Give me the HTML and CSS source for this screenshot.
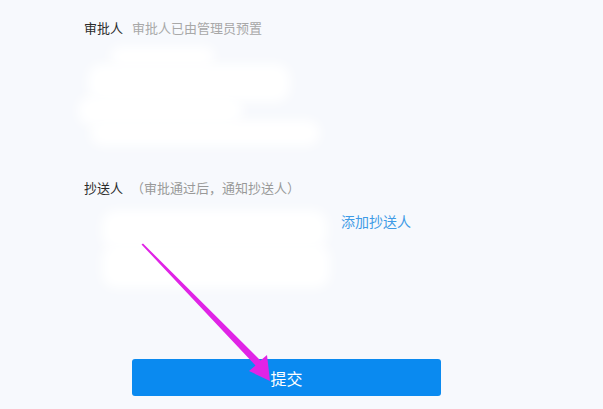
FILE: index.html
```html
<!DOCTYPE html>
<html lang="zh-CN">
<head>
<meta charset="utf-8">
<title>审批</title>
<link rel="stylesheet" href="styles.css">
</head>
<body>
<div class="page">
  <div class="field-row first">
    <span class="label">审批人</span>
    <span class="hint">审批人已由管理员预置</span>
  </div>
  <div class="redact-area one">
    <div class="smudge s1"></div>
    <div class="smudge s2"></div>
    <div class="smudge s3"></div>
    <div class="smudge s4"></div>
  </div>
  <div class="field-row second">
    <span class="label">抄送人</span>
    <span class="hint paren">（审批通过后，通知抄送人）</span>
  </div>
  <div class="cc-row">
    <div class="redact-area two">
      <div class="smudge t1"></div>
      <div class="smudge t2"></div>
    </div>
    <a class="add-link">添加抄送人</a>
  </div>
  <div class="actions">
    <button class="submit">提交</button>
  </div>
</div>
<svg class="arrow" width="603" height="409" viewBox="0 0 603 409">
  <polygon points="141.5,244.5 143,243.5 260.5,360.5 267,355 270,381 249,371 255.5,365.5" fill="#e024e6"/>
</svg>
</body>
</html>
```
FILE: styles.css
```css
html, body {
  margin: 0;
  padding: 0;
}
body {
  background: #f7f9fd;
  font-family: "Microsoft YaHei", "Noto Sans CJK SC", "Noto Sans", sans-serif;
  width: 603px;
  height: 409px;
  overflow: hidden;
  position: relative;
}
.page {
  padding-left: 84px;
}
.field-row {
  display: flex;
  align-items: center;
  height: 16px;
  line-height: 16px;
  font-size: 13px;
}
.field-row.first {
  padding-top: 20px;
}
.label {
  color: #2b2b2b;
}
.hint {
  color: #a8a8a8;
  margin-left: 9px;
}
.hint.paren {
  margin-left: 8px;
  color: #999;
}
.redact-area.one {
  height: 144px;
  margin-left: -6px;
  display: flex;
  flex-direction: column;
}
.smudge {
  background: #ffffff;
  filter: blur(6px);
  border-radius: 14px;
}
.s1 { width: 105px; height: 22px; margin: 10px 0 0 32px; }
.s2 { width: 202px; height: 38px; margin: -4px 0 0 10px; }
.s3 { width: 165px; height: 30px; margin: -6px 0 0 0; }
.s4 { width: 230px; height: 26px; margin: -6px 0 0 12px; }
.cc-row {
  display: flex;
  align-items: flex-start;
  padding-left: 18px;
  margin-top: 14px;
}
.redact-area.two {
  width: 230px;
  height: 80px;
  display: flex;
  flex-direction: column;
}
.t1 { width: 225px; height: 40px; margin-left: 0; }
.t2 { width: 228px; height: 44px; margin: -6px 0 0 0; }
.add-link {
  color: #3f9be6;
  font-size: 14px;
  line-height: 18px;
  margin-left: 9px;
  margin-top: 2px;
  cursor: pointer;
}
.actions {
  margin-top: 69px;
  padding-left: 48px;
}
.submit {
  width: 309px;
  height: 37px;
  border: 0;
  border-radius: 3px;
  background: #0a8af0;
  color: #fff;
  font-family: "Microsoft YaHei", "Noto Sans CJK SC", sans-serif;
  font-size: 16px;
  padding: 0;
  cursor: pointer;
}
.arrow {
  position: absolute;
  left: 0;
  top: 0;
  pointer-events: none;
}
```
